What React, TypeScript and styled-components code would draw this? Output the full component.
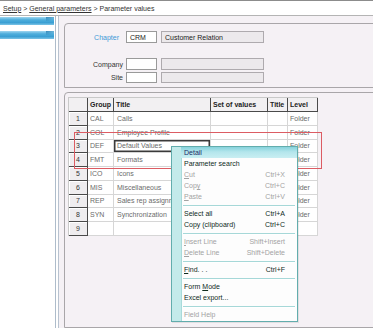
import styled, { createGlobalStyle } from 'styled-components';

const GlobalStyle = createGlobalStyle`
    html, body {
        margin: 0;
        padding: 0;
        overflow: hidden;
        background: #ffffff;
    }
    * {
        box-sizing: border-box;
    }
`;

const Frame = styled.div`
    width: 373px;
    height: 328px;
    position: relative;
    overflow: hidden;
    display: grid;
    grid-template-rows: 16px 1fr;
    font-family: 'Liberation Sans', Arial, sans-serif;
    font-size: 7px;
    color: #333;
`;

const Header = styled.div`
    background: #fff;
    border-top: 1px solid #8c8c8c;
    border-bottom: 1px solid #b4b4b4;
    display: flex;
    align-items: center;
    padding-left: 3px;
    color: #333;
    white-space: pre;
`;

const Crumb = styled.span<{ $link?: boolean }>`
    text-decoration: ${({ $link }) => ($link ? 'underline' : 'none')};
`;

const Body = styled.div`
    display: grid;
    grid-template-columns: 56px 3px 1fr;
    min-height: 0;
`;

const Sidebar = styled.div`
    background: #fff;
    border-right: 1px solid #aebccb;
    display: grid;
    grid-template-rows: 8px 8px;
    row-gap: 6px;
    align-content: start;
    padding: 1px 1px 0 0;
`;

const NavBar = styled.div`
    position: relative;
    background: linear-gradient(180deg, #9fd6f0 0%, #4eaedc 35%, #3a9fd3 70%, #7cc4e6 100%);
    &::after {
        content: '';
        position: absolute;
        right: 0;
        top: 0;
        width: 8px;
        height: 4px;
        background: linear-gradient(160deg, #2f86b8 0%, transparent 80%);
    }
`;

const Divider = styled.div`
    background: #fff;
    border-right: 1px solid #b8c3d0;
`;

const Main = styled.div`
    background: #f5f1f5;
    padding: 7px 0 0 5px;
    display: flex;
    flex-direction: column;
    gap: 4px;
    min-width: 0;
`;

const Panel = styled.div<{ $grow?: boolean }>`
    margin-right: -12px;
    border: 1px solid #a9a6a9;
    border-radius: 4px 0 0 0;
    background: #f5f1f5;
    flex: ${({ $grow }) => ($grow ? 1 : 'none')};
`;

const FormPanel = styled(Panel)`
    height: 65px;
    padding: 7px 0 0 0;
    display: grid;
    grid-template-columns: 57px 31px 103px;
    grid-template-rows: 12px 11px 12px 11px;
    column-gap: 4px;
    row-gap: 2px;
    align-content: start;
`;

const Spacer = styled.div`
    grid-column: 1 / 4;
`;

const Label = styled.div<{ $accent?: boolean; $inset?: number }>`
    display: flex;
    align-items: center;
    justify-content: flex-end;
    padding-right: ${({ $inset }) => $inset ?? 0}px;
    margin-right: -1px;
    color: ${({ $accent }) => ($accent ? '#3c9ad8' : '#333')};
`;

const Field = styled.div<{ $readonly?: boolean }>`
    border: 1px solid ${({ $readonly }) => ($readonly ? '#aeaaae' : '#9a9a9a')};
    background: ${({ $readonly }) => ($readonly ? '#ece9ec' : '#ffffff')};
    display: flex;
    align-items: center;
    padding-left: 3px;
    color: #222;
    white-space: nowrap;
    overflow: hidden;
`;

const GridPanel = styled(Panel)`
    padding: 4px 0 0 3px;
`;

const Table = styled.div`
    display: grid;
    width: 250px;
    grid-template-columns: 19px 26px 97px 57px 20px 30px;
    grid-template-rows: 14px repeat(9, 13.75px);
    border-left: 1px solid #c9c9c9;
    border-top: 1px solid #c9c9c9;
`;

const HeadCell = styled.div`
    background: #f2f0f2;
    border-right: 1px solid #4a4a4a;
    border-bottom: 1px solid #4a4a4a;
    font-weight: bold;
    color: #222;
    display: flex;
    align-items: center;
    padding-left: 2px;
    white-space: nowrap;
    overflow: hidden;
`;

const RowNum = styled.div`
    background: #efedef;
    border-right: 1px solid #4a4a4a;
    border-bottom: 1px solid #4a4a4a;
    box-shadow: inset 1px 1px 0 #fff;
    display: flex;
    align-items: center;
    justify-content: center;
    color: #333;
`;

const Cell = styled.div<{ $focused?: boolean; $pad?: number }>`
    background: #fff;
    border-right: 1px solid #d6d6d6;
    border-bottom: 1px solid #d6d6d6;
    display: flex;
    align-items: center;
    padding-left: ${({ $pad }) => $pad ?? 2}px;
    color: #6b6b6b;
    white-space: nowrap;
    overflow: hidden;
    box-shadow: ${({ $focused }) => ($focused ? 'inset 0 0 0 1.5px #3a3a3a' : 'none')};
`;

const Highlight = styled.div`
    position: absolute;
    left: 74px;
    top: 132px;
    width: 248px;
    height: 37px;
    border: 1px solid #dc5c63;
    pointer-events: none;
`;

const Menu = styled.div`
    position: absolute;
    left: 171px;
    top: 146px;
    width: 127px;
    padding-bottom: 1px;
    border: 1px solid #62adad;
    background: linear-gradient(90deg, #c3eaea 0px, #c3eaea 9px, #a9dada 9px, #a9dada 10px, #fdfdfd 10px);
    display: flex;
    flex-direction: column;
    box-shadow: 1px 1px 0 rgba(0, 0, 0, 0.08);
`;

const MenuItem = styled.div<{ $active?: boolean; $disabled?: boolean }>`
    height: 11px;
    margin-left: 9px;
    padding: 0 12px 0 3px;
    display: flex;
    align-items: center;
    justify-content: space-between;
    white-space: nowrap;
    color: ${({ $active, $disabled }) => ($active ? '#1c2c66' : $disabled ? '#a3a3a3' : '#0f2b1e')};
    background: ${({ $active }) =>
        $active ? 'linear-gradient(180deg, #86d2dc 0%, #b4e6ec 45%, #c9eef2 100%)' : 'transparent'};
`;

const Shortcut = styled.span`
    color: inherit;
`;

const Key = styled.span`
    text-decoration: underline;
`;

const Separator = styled.div`
    height: 6px;
    margin: 0 2px 0 11px;
    display: flex;
    align-items: center;
    &::before {
        content: '';
        flex: 1;
        height: 1px;
        background: #a6d8d8;
        box-shadow: 0 1px 0 #ffffff;
    }
`;

interface Row {
    num: number;
    group: string;
    title: string;
    level: string;
}

const rows: Row[] = [
    { num: 1, group: 'CAL', title: 'Calls', level: 'Folder' },
    { num: 2, group: 'COL', title: 'Employee Profile', level: 'Folder' },
    { num: 3, group: 'DEF', title: 'Default Values', level: 'Folder' },
    { num: 4, group: 'FMT', title: 'Formats', level: 'Folder' },
    { num: 5, group: 'ICO', title: 'Icons', level: 'Folder' },
    { num: 6, group: 'MIS', title: 'Miscellaneous', level: 'Folder' },
    { num: 7, group: 'REP', title: 'Sales rep assignment', level: 'Folder' },
    { num: 8, group: 'SYN', title: 'Synchronization', level: 'Folder' },
    { num: 9, group: '', title: '', level: '' },
];

type MenuEntry =
    | { sep: true }
    | { sep?: false; label: React.ReactNode; shortcut?: string; active?: boolean; disabled?: boolean };

const menu: MenuEntry[] = [
    { label: 'Detail', active: true },
    { label: 'Parameter search' },
    { label: <><Key>C</Key>ut</>, shortcut: 'Ctrl+X', disabled: true },
    { label: <>Cop<Key>y</Key></>, shortcut: 'Ctrl+C', disabled: true },
    { label: <><Key>P</Key>aste</>, shortcut: 'Ctrl+V', disabled: true },
    { sep: true },
    { label: 'Select all', shortcut: 'Ctrl+A' },
    { label: 'Copy (clipboard)', shortcut: 'Ctrl+C' },
    { sep: true },
    { label: <><Key>I</Key>nsert Line</>, shortcut: 'Shift+Insert', disabled: true },
    { label: <><Key>D</Key>elete Line</>, shortcut: 'Shift+Delete', disabled: true },
    { sep: true },
    { label: <><Key>F</Key>ind. . .</>, shortcut: 'Ctrl+F' },
    { sep: true },
    { label: <>Form <Key>M</Key>ode</> },
    { label: 'Excel export...' },
    { sep: true },
    { label: 'Field Help', disabled: true },
];

export default function App() {
    return (
        <>
            <GlobalStyle />
            <Frame>
                <Header>
                    <Crumb $link>Setup</Crumb>
                    <Crumb>{' > '}</Crumb>
                    <Crumb $link>General parameters</Crumb>
                    <Crumb>{' > Parameter values'}</Crumb>
                </Header>
                <Body>
                    <Sidebar>
                        <NavBar />
                        <NavBar />
                    </Sidebar>
                    <Divider />
                    <Main>
                        <FormPanel>
                            <Label $accent $inset={4}>Chapter</Label>
                            <Field>CRM</Field>
                            <Field $readonly>Customer Relation</Field>
                            <Spacer />
                            <Label>Company</Label>
                            <Field />
                            <Field $readonly />
                            <Label>Site</Label>
                            <Field />
                            <Field $readonly />
                        </FormPanel>
                        <GridPanel $grow>
                            <Table>
                                <HeadCell />
                                <HeadCell>Group</HeadCell>
                                <HeadCell>Title</HeadCell>
                                <HeadCell>Set of values</HeadCell>
                                <HeadCell>Title</HeadCell>
                                <HeadCell>Level</HeadCell>
                                {rows.map((r) => (
                                    <RowFragment key={r.num} row={r} />
                                ))}
                            </Table>
                        </GridPanel>
                    </Main>
                </Body>
                <Highlight />
                <Menu>
                    {menu.map((m, i) =>
                        m.sep ? (
                            <Separator key={`sep-${i}`} />
                        ) : (
                            <MenuItem key={`item-${i}`} $active={m.active} $disabled={m.disabled}>
                                <span>{m.label}</span>
                                {m.shortcut && <Shortcut>{m.shortcut}</Shortcut>}
                            </MenuItem>
                        ),
                    )}
                </Menu>
            </Frame>
        </>
    );
}

function RowFragment({ row }: { row: Row }) {
    return (
        <>
            <RowNum>{row.num}</RowNum>
            <Cell>{row.group}</Cell>
            <Cell $pad={3} $focused={row.num === 3}>
                {row.title}
            </Cell>
            <Cell />
            <Cell />
            <Cell>{row.level}</Cell>
        </>
    );
}
